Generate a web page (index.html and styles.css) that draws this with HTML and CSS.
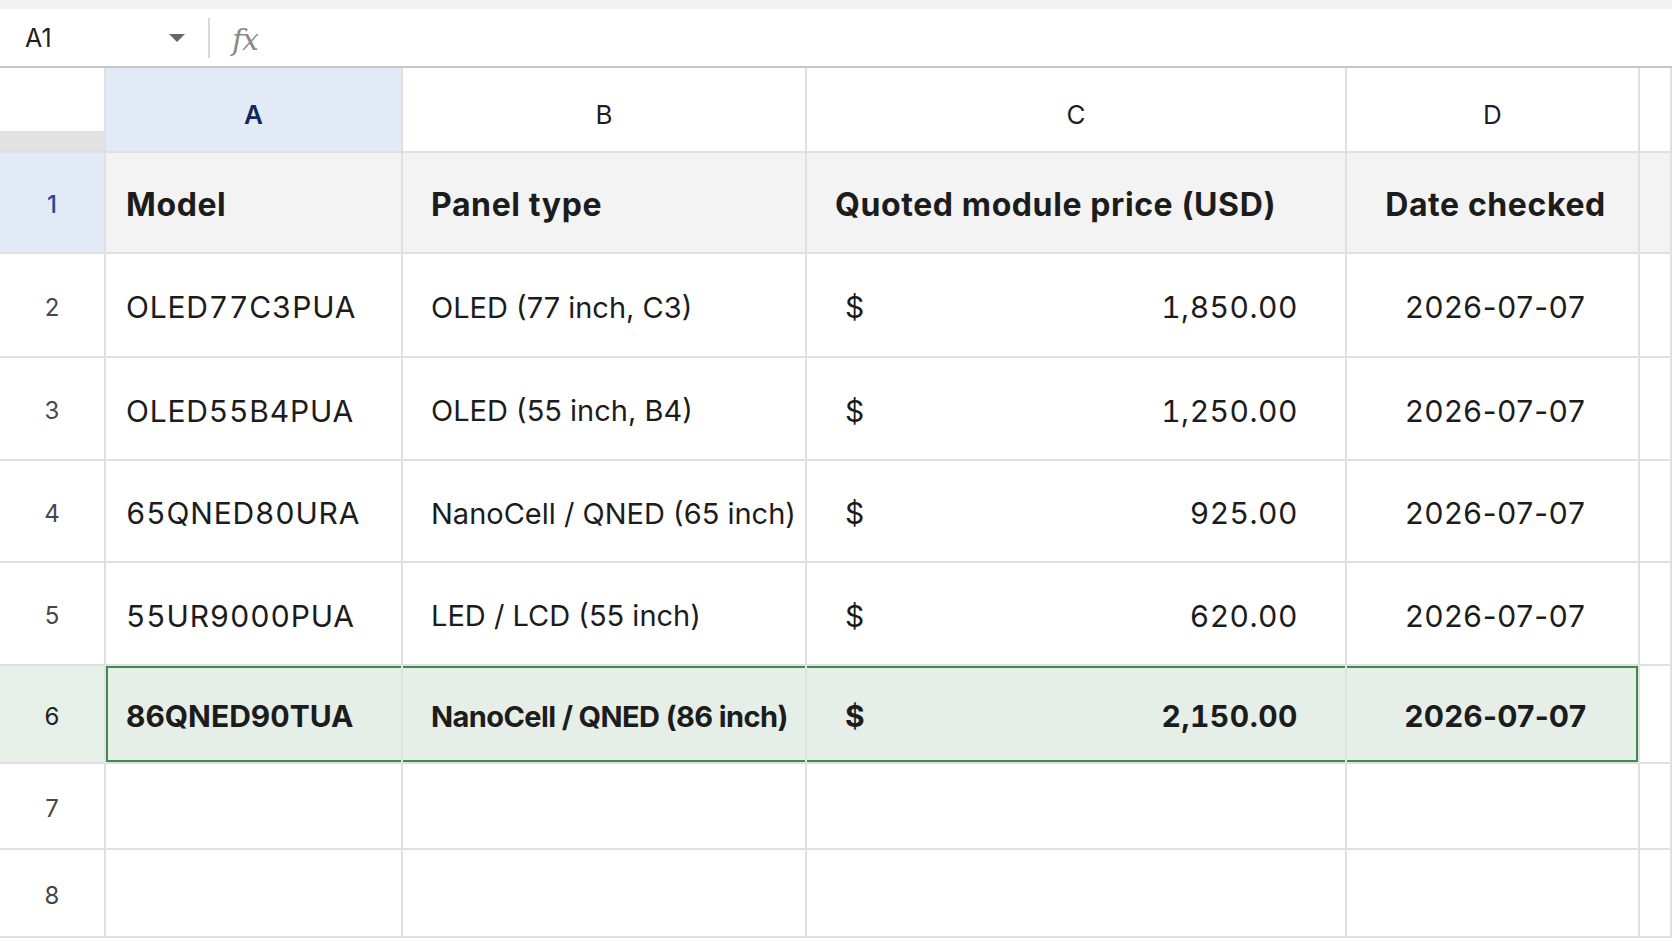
FILE: index.html
```html
<!DOCTYPE html>
<html lang="en">
<head>
    <meta charset="UTF-8" />
    <meta name="viewport" content="width=device-width, initial-scale=1.0" />
    <title>Module prices</title>
    <link rel="stylesheet" href="styles.css">
</head>
<body>
    <div class="topstrip"></div>
    <div class="formula-bar">
        <div class="name-box">
            <span>A1</span>
            <svg class="caret" width="18" height="10" viewBox="0 0 18 10"><path d="M1 1h16L9 9z" fill="#666"/></svg>
        </div>
        <div class="divider"></div>
        <span class="fx">fx</span>
    </div>
    <div class="sheet">
        <div class="corner"></div>
        <div class="col-head active">A</div>
        <div class="col-head">B</div>
        <div class="col-head">C</div>
        <div class="col-head">D</div>
        <div class="col-head"></div>

        <div class="row-head active">1</div>
        <div class="cell title">Model</div>
        <div class="cell title pad-b">Panel type</div>
        <div class="cell title pad-b">Quoted module price (USD)</div>
        <div class="cell title center">Date checked</div>
        <div class="cell title"></div>

        <div class="row-head">2</div>
        <div class="cell code">OLED77C3PUA</div>
        <div class="cell kind">OLED (77 inch, C3)</div>
        <div class="cell money"><span>$</span><span>1,850.00</span></div>
        <div class="cell date">2026-07-07</div>
        <div class="cell"></div>

        <div class="row-head">3</div>
        <div class="cell code">OLED55B4PUA</div>
        <div class="cell kind">OLED (55 inch, B4)</div>
        <div class="cell money"><span>$</span><span>1,250.00</span></div>
        <div class="cell date">2026-07-07</div>
        <div class="cell"></div>

        <div class="row-head">4</div>
        <div class="cell code">65QNED80URA</div>
        <div class="cell kind">NanoCell / QNED (65 inch)</div>
        <div class="cell money"><span>$</span><span>925.00</span></div>
        <div class="cell date">2026-07-07</div>
        <div class="cell"></div>

        <div class="row-head">5</div>
        <div class="cell code">55UR9000PUA</div>
        <div class="cell kind">LED / LCD (55 inch)</div>
        <div class="cell money"><span>$</span><span>620.00</span></div>
        <div class="cell date">2026-07-07</div>
        <div class="cell"></div>

        <div class="row-head picked">6</div>
        <div class="cell code picked first">86QNED90TUA</div>
        <div class="cell kind picked">NanoCell / QNED (86 inch)</div>
        <div class="cell money picked"><span>$</span><span>2,150.00</span></div>
        <div class="cell date picked last">2026-07-07</div>
        <div class="cell"></div>

        <div class="row-head">7</div>
        <div class="cell"></div>
        <div class="cell"></div>
        <div class="cell"></div>
        <div class="cell"></div>
        <div class="cell"></div>

        <div class="row-head">8</div>
        <div class="cell"></div>
        <div class="cell"></div>
        <div class="cell"></div>
        <div class="cell"></div>
        <div class="cell"></div>
    </div>
</body>
</html>
```

FILE: styles.css
```css
body {
    margin: 0;
    font-family: Inter, "Noto Sans", sans-serif;
    color: #1c1c1c;
    background-color: #ffffff;
    overflow: hidden;
}
.topstrip {
    height: 9px;
    background-color: #f1f1f1;
}
.formula-bar {
    height: 57px;
    display: flex;
    align-items: center;
    border-bottom: 2px solid #c6c6c6;
}
.name-box {
    width: 196px;
    box-sizing: border-box;
    padding-left: 25px;
    padding-right: 10px;
    display: flex;
    align-items: center;
    justify-content: space-between;
    font-size: 25px;
    color: #1f1f1f;
}
.divider {
    width: 2px;
    height: 40px;
    margin-left: 12px;
    background-color: #d9d9d9;
}
.fx {
    margin-left: 22px;
    padding-top: 4px;
    font-family: "DejaVu Serif", serif;
    font-style: italic;
    font-size: 30px;
    color: #8a8a8a;
    letter-spacing: -1px;
}
.sheet {
    display: grid;
    grid-template-columns: 106px 297px 404px 540px 293px 1fr;
    grid-template-rows: 85px 101px 104px 103px 102px 103px 98px 86px 88px;
}
.sheet > div {
    box-sizing: border-box;
    border-right: 2px solid #e0e0e0;
    border-bottom: 2px solid #e0e0e0;
    display: flex;
    align-items: center;
    padding-top: 4px;
}
.corner {
    background: linear-gradient(to bottom, #ffffff 63px, #e2e2e2 63px);
}
.sheet > .col-head {
    justify-content: center;
    padding-top: 10px;
    font-size: 26px;
    color: #1f1f1f;
}
.col-head.active {
    background-color: #e2eaf8;
    color: #0e2a5a;
    font-weight: 600;
}
.row-head {
    justify-content: center;
    font-size: 24px;
    color: #474747;
}
.row-head.active {
    background-color: #e2eaf8;
    color: #1d4d9c;
    font-weight: 500;
}
.row-head.picked {
    background-color: #e7efe9;
    color: #222;
}
.cell {
    padding-left: 20px;
    font-size: 30px;
    white-space: nowrap;
}
.pad-b {
    padding-left: 28px;
}
.title {
    background-color: #f3f3f3;
    font-weight: 700;
    font-size: 32px;
    letter-spacing: 0.6px;
}
.center {
    justify-content: center;
    padding-left: 6px;
}
.code {
    letter-spacing: 0.8px;
    font-feature-settings: "tnum";
}
.kind {
    padding-left: 28px;
    font-size: 29px;
}
.money {
    justify-content: space-between;
    padding-left: 38px;
    padding-right: 47px;
    font-feature-settings: "tnum";
    letter-spacing: 0.5px;
}
.date {
    justify-content: center;
    padding-left: 6px;
    letter-spacing: 0.8px;
}
.picked {
    background-color: #e6eee8;
}
.cell.picked {
    font-weight: 700;
    box-shadow: inset 0 2px #3c8a4e, inset 0 -2px #3c8a4e;
}
.kind.picked {
    letter-spacing: -0.6px;
}
.code.picked {
    letter-spacing: 0;
}
.date.picked {
    letter-spacing: 0.2px;
}
.cell.picked.first {
    box-shadow: inset 0 2px #3c8a4e, inset 0 -2px #3c8a4e, inset 2px 0 #3c8a4e;
}
.cell.picked.last {
    box-shadow: inset 0 2px #3c8a4e, inset 0 -2px #3c8a4e, inset -2px 0 #3c8a4e;
}
```
